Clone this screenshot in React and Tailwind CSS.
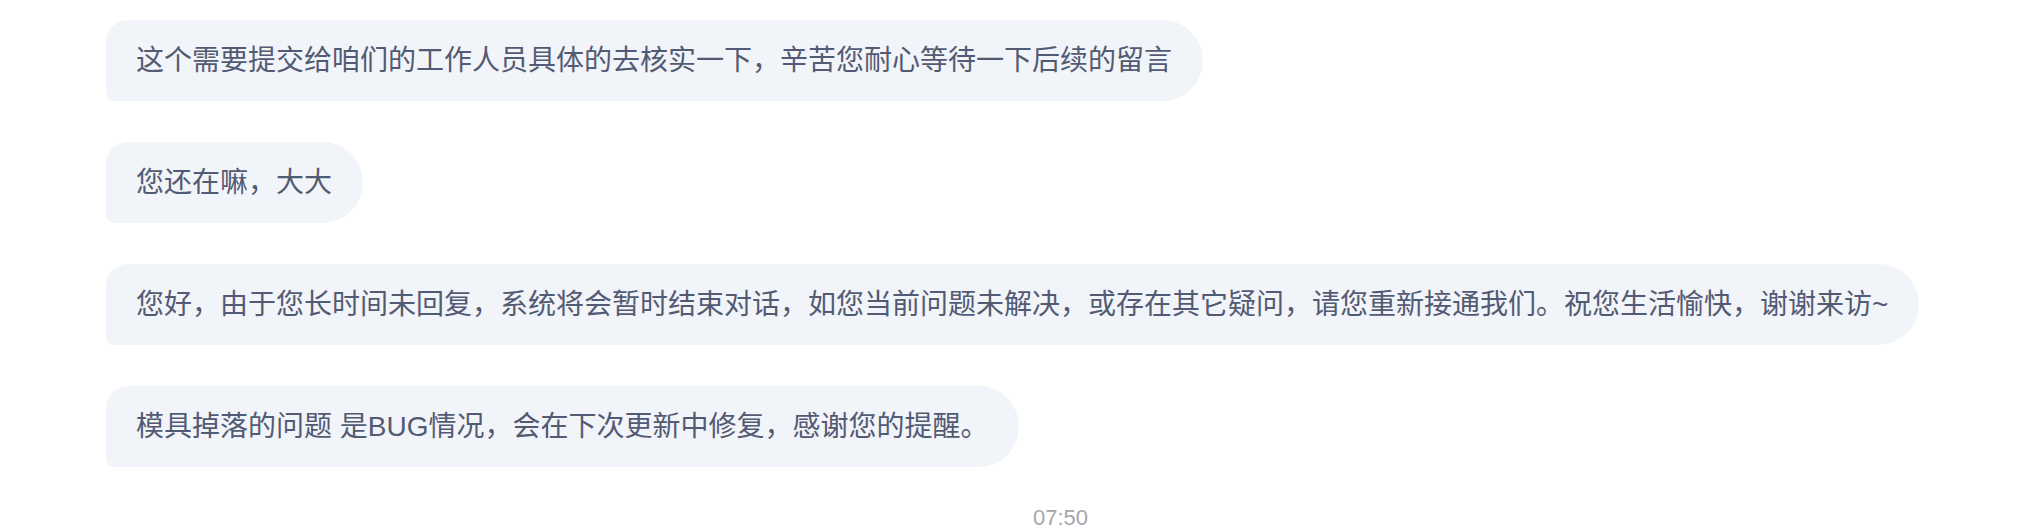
const messages = [
  "这个需要提交给咱们的工作人员具体的去核实一下，辛苦您耐心等待一下后续的留言",
  "您还在嘛，大大",
  "您好，由于您长时间未回复，系统将会暂时结束对话，如您当前问题未解决，或存在其它疑问，请您重新接通我们。祝您生活愉快，谢谢来访~",
  "模具掉落的问题 是BUG情况，会在下次更新中修复，感谢您的提醒。",
];

const Bubble = ({ text }) => (
  <div className="self-start whitespace-nowrap bg-[#f1f4f8] text-[#535a73] text-[28px] leading-[41px] py-[20px] pl-[30px] pr-[31px] rounded-tl-[22px] rounded-bl-[9px] rounded-r-[41px]">
    {text}
  </div>
);

const App = () => {
  return (
    <div
      className="w-full min-h-[532px] bg-white pl-[106px] pr-[22px] pt-[20px]"
      style={{ fontFamily: '"Liberation Sans", "Noto Sans CJK SC", sans-serif' }}
    >
      <div className="flex flex-col gap-[41px]">
        {messages.map((m, i) => (
          <Bubble key={i} text={m} />
        ))}
      </div>
      <div className="mt-[36px] text-center text-[22px] leading-[30px] text-[#a3a7ae]">07:50</div>
    </div>
  );
};

export default App;
